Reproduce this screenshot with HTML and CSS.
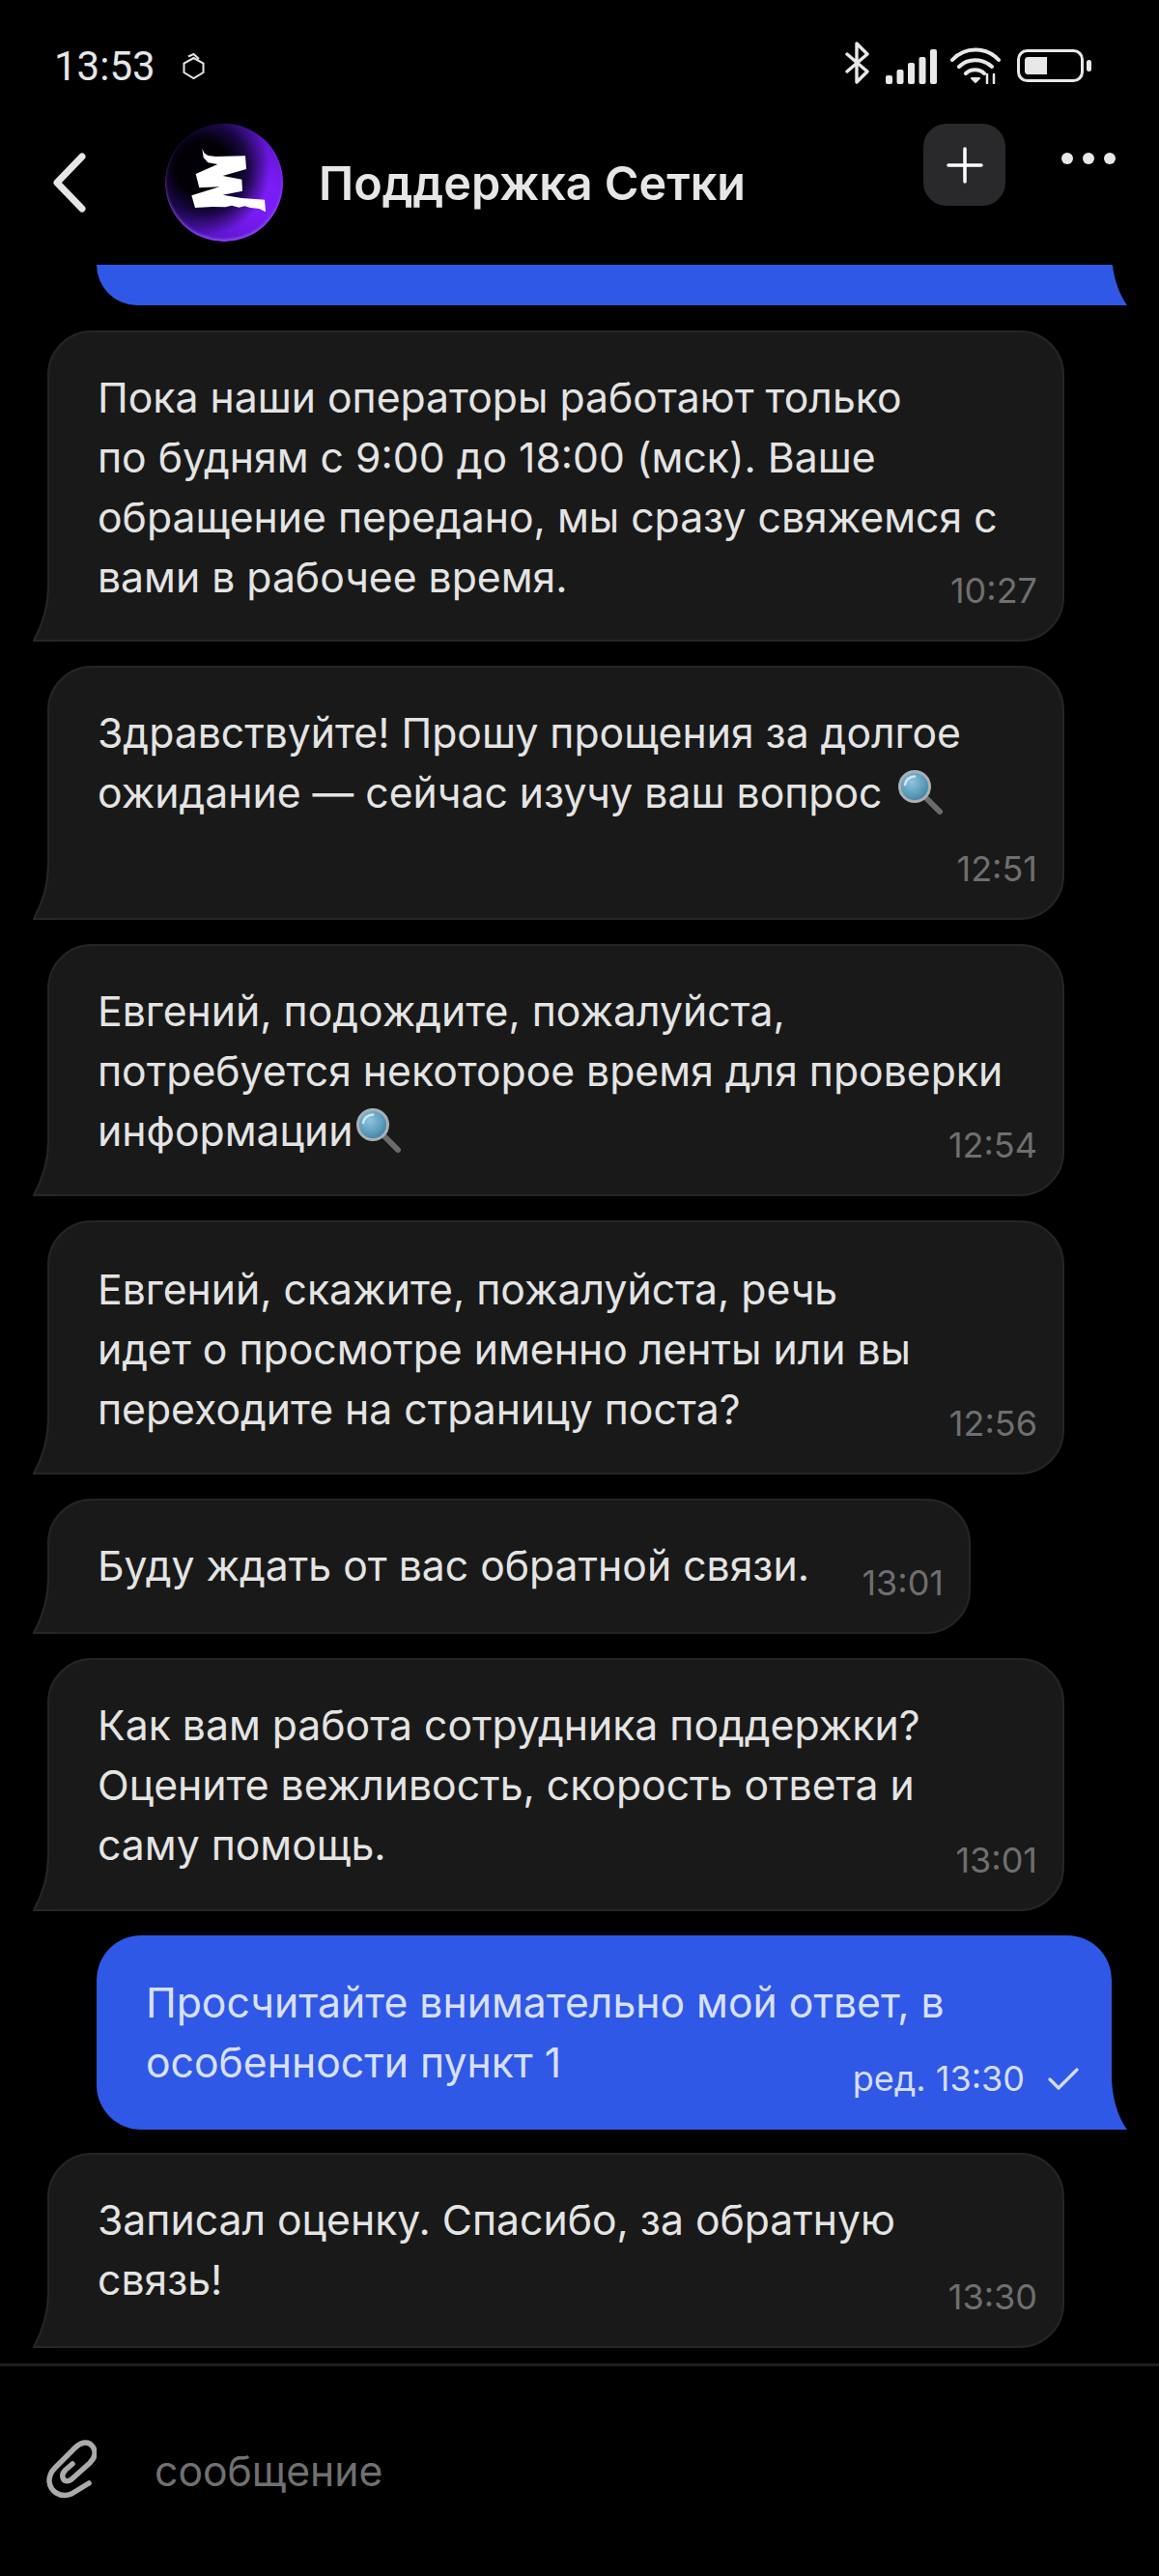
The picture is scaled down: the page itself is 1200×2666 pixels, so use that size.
FILE: index.html
```html
<!DOCTYPE html>
<html lang="ru">
<head>
  <meta charset="UTF-8">
  <title>Поддержка Сетки</title>
  <link rel="stylesheet" href="styles.css">
</head>
<body>
  <svg class="defs" width="0" height="0">
    <defs>
      <radialGradient id="lens" cx="40%" cy="35%" r="70%">
        <stop offset="0" stop-color="#8fc4dc"/>
        <stop offset="0.6" stop-color="#5c9dbd"/>
        <stop offset="1" stop-color="#3f7b9c"/>
      </radialGradient>
      <symbol id="loupe" viewBox="0 0 48 48">
        <path d="M31 31 L44 44" stroke="#6b6b6b" stroke-width="6" stroke-linecap="round"/>
        <circle cx="18" cy="18" r="15.5" fill="url(#lens)" stroke="#a9b1b6" stroke-width="3"/>
        <path d="M8 16 C9 11 13 8 18 7.5" stroke="#cfe7f2" stroke-width="2.5" fill="none" stroke-linecap="round"/>
      </symbol>
      <symbol id="tail" viewBox="0 0 24 56">
        <path d="M16 0 C16 22 9 40 1 55 L24 55 L24 0 Z" fill="#191919"/>
        <path d="M16 0 C16 22 9 40 1 55 L24 55" fill="none" stroke="#272727" stroke-width="2"/>
      </symbol>
      <symbol id="tail-blue" viewBox="0 0 24 56">
        <path d="M8 0 C8 22 14 42 24 56 L0 56 L0 0 Z" fill="#3058e6"/>
      </symbol>
    </defs>
  </svg>

  <div class="phone">
    <div class="statusbar">
      <div class="status-left">
        <span class="clock">13:53</span>
        <svg class="hex" viewBox="0 0 25 29" fill="none" stroke="#e6e6e6" stroke-width="2">
          <path d="M12.5 5 L22.5 10.5 V20 L12.5 26 L2.5 20 V10.500 Z"/>
          <path d="M7 3.500 L12.500 1 L18 6"/>
        </svg>
      </div>
      <div class="status-right">
        <svg class="bt" viewBox="0 0 27 44" fill="none" stroke="#e8e8e8" stroke-width="3.400" stroke-linecap="round" stroke-linejoin="round">
          <path d="M3 13 L24 31 L13 42 V2 L24 13 L3 31"/>
        </svg>
        <svg class="signal" viewBox="0 0 53 36" fill="#e8e8e8">
          <rect x="0" y="27" width="7" height="9" rx="2"/>
          <rect x="11.500" y="21" width="7" height="15" rx="2"/>
          <rect x="23" y="14" width="7" height="22" rx="2"/>
          <rect x="34.500" y="8" width="7" height="28" rx="2"/>
          <rect x="46" y="0" width="7" height="36" rx="2"/>
        </svg>
        <svg class="wifi" viewBox="0 0 52 38" fill="none" stroke="#e8e8e8" stroke-width="4" stroke-linecap="round">
          <path d="M2 13 C15 -1 37 -1 50 13"/>
          <path d="M9 20 C18 11 33 11 43 20"/>
          <path d="M16 27 C21 22 30 22 35 27"/>
          <path d="M22 32 L26 36 L30 32 Z" fill="#e8e8e8" stroke-width="2" stroke-linejoin="round"/>
          <path d="M38 28 V37 M45 28 V37" stroke-width="2.500"/>
        </svg>
        <svg class="battery" viewBox="0 0 77 34" fill="none">
          <rect x="1.500" y="1.500" width="66" height="31" rx="9" stroke="#e8e8e8" stroke-width="3"/>
          <path d="M12 8 H31 V26 H12 C9 26 8 25 8 22 V12 C8 9 9 8 12 8 Z" fill="#e8e8e8"/>
          <rect x="72" y="11" width="5" height="12" rx="2.500" fill="#e8e8e8"/>
        </svg>
      </div>
    </div>

    <header class="topbar">
      <div class="topbar-left">
        <svg class="back" viewBox="0 0 34 62" fill="none" stroke="#e6e6e6" stroke-width="7" stroke-linecap="round" stroke-linejoin="round">
          <path d="M30 4 L4 31 L30 58"/>
        </svg>
        <div class="avatar">
          <svg viewBox="93 85 366 366">
            <path d="M208 162 L214 176 L226 184 L250 187 L342 185 L345 226 L272 247 L331 258 L333 294 L272 306 L330 316 L402 321 L405 359 L385 349 L358 346 L340 341 L322 345 L300 339 L280 344 L240 343 L186 346 L175 308 L262 281 L199 284 L188 241 L256 211 L226 206 L212 190 Z" fill="#fff"/>
          </svg>
        </div>
        <span class="title">Поддержка Сетки</span>
      </div>
      <div class="topbar-right">
        <div class="add-btn">
          <svg viewBox="0 0 38 38" stroke="#fff" stroke-width="3.500" stroke-linecap="round">
            <path d="M19 2 V36 M2 19 H36"/>
          </svg>
        </div>
        <div class="dots"><i></i><i></i><i></i></div>
      </div>
    </header>

    <main class="chat">
      <div class="bubble bubble-out bubble-cut">
        <svg class="tail-out"><use href="#tail-blue"/></svg>
      </div>

      <div class="bubble bubble-in tight">
        Пока наши операторы работают только<br>
        по будням с 9:00 до 18:00 (мск). Ваше<br>
        обращение передано, мы сразу свяжемся с<br>
        вами в рабочее время.
        <span class="time">10:27</span>
        <svg class="tail-in"><use href="#tail"/></svg>
      </div>

      <div class="bubble bubble-in extra-row">
        Здравствуйте! Прошу прощения за долгое<br>
        ожидание — сейчас изучу ваш вопрос <svg class="emoji"><use href="#loupe"/></svg>
        <span class="time">12:51</span>
        <svg class="tail-in"><use href="#tail"/></svg>
      </div>

      <div class="bubble bubble-in">
        Евгений, подождите, пожалуйста,<br>
        потребуется некоторое время для проверки<br>
        информации<svg class="emoji"><use href="#loupe"/></svg>
        <span class="time">12:54</span>
        <svg class="tail-in"><use href="#tail"/></svg>
      </div>

      <div class="bubble bubble-in lowered">
        Евгений, скажите, пожалуйста, речь<br>
        идет о просмотре именно ленты или вы<br>
        переходите на страницу поста?
        <span class="time">12:56</span>
        <svg class="tail-in"><use href="#tail"/></svg>
      </div>

      <div class="bubble bubble-in bubble-short roomy">
        Буду ждать от вас обратной связи.
        <span class="time">13:01</span>
        <svg class="tail-in"><use href="#tail"/></svg>
      </div>

      <div class="bubble bubble-in loose">
        Как вам работа сотрудника поддержки?<br>
        Оцените вежливость, скорость ответа и<br>
        саму помощь.
        <span class="time">13:01</span>
        <svg class="tail-in"><use href="#tail"/></svg>
      </div>

      <div class="bubble bubble-out">
        Просчитайте внимательно мой ответ, в<br>
        особенности пункт 1
        <span class="time time-out">ред. 13:30
          <svg class="check" viewBox="0 0 32 23" fill="none" stroke="#d5ddf8" stroke-width="3.200" stroke-linecap="round" stroke-linejoin="round">
            <path d="M2 12 L11 21 L30 2"/>
          </svg>
        </span>
        <svg class="tail-out"><use href="#tail-blue"/></svg>
      </div>

      <div class="bubble bubble-in roomy">
        Записал оценку. Спасибо, за обратную<br>
        связь!
        <span class="time">13:30</span>
        <svg class="tail-in"><use href="#tail"/></svg>
      </div>
    </main>

    <footer class="composer">
      <svg class="clip" viewBox="0 0 52 62" fill="none" stroke="#ababab" stroke-width="5.500" stroke-linecap="round" stroke-linejoin="round">
        <path d="M44 46 L26 57 C14 62 4 54 3 44 C3 38 5 34 9 30 L30 9 C36 3 44 2 48 8 C52 14 50 20 45 25 L26 42 C22 45 18 44 17 40 C16 37 18 34 20 32 L27 26"/>
      </svg>
      <span class="placeholder">сообщение</span>
    </footer>
  </div>
</body>
</html>
```

FILE: styles.css
```css
*{
  margin: 0;
  padding: 0;
  box-sizing: border-box;
}
body{
  background-color: #000;
  width: 1200px;
  height: 2666px;
  overflow: hidden;
  font-family: 'Inter', 'Noto Sans', sans-serif;
}
.defs{
  position: absolute;
}
.phone{
  height: 2666px;
  display: flex;
  flex-direction: column;
}

/* status bar */
.statusbar{
  height: 120px;
  padding: 43px 70px 0 56px;
  display: flex;
  justify-content: space-between;
  align-items: flex-start;
}
.status-left{
  display: flex;
  align-items: center;
  gap: 27px;
}
.clock{
  font-family: 'Roboto', sans-serif;
  font-size: 42px;
  line-height: 52px;
  color: #e6e6e6;
}
.hex{
  width: 25px;
  height: 29px;
}
.status-right{
  display: flex;
  align-items: flex-start;
}
.bt{
  width: 27px;
  height: 44px;
  margin-right: 16px;
}
.signal{
  width: 53px;
  height: 36px;
  margin-top: 8px;
  margin-right: 14px;
}
.wifi{
  width: 52px;
  height: 38px;
  margin-top: 6px;
  margin-right: 17px;
}
.battery{
  width: 77px;
  height: 34px;
  margin-top: 8px;
}

/* header */
.topbar{
  height: 154px;
  padding: 8px 45px 0 55px;
  display: flex;
  justify-content: space-between;
  align-items: flex-start;
}
.topbar-left{
  display: flex;
  align-items: center;
  height: 122px;
}
.back{
  width: 34px;
  height: 62px;
  margin-right: 82px;
}
.avatar{
  width: 122px;
  height: 122px;
  border-radius: 50%;
  margin-right: 37px;
  background:
    radial-gradient(circle at 32% 38%, #020006 25%, #1a0745 42%, rgba(90, 20, 210, 0) 62%),
    radial-gradient(circle at 80% 62%, #7a1cf5 15%, #5a14c8 55%, #34108a 100%);
  box-shadow: inset 0 -2px 3px rgba(170, 110, 255, 0.7);
}
.avatar svg{
  display: block;
  width: 122px;
  height: 122px;
}
.title{
  font-size: 48.500px;
  font-weight: 600;
  color: #e6e6e6;
  line-height: 60px;
  margin-top: 2px;
}
.topbar-right{
  display: flex;
  align-items: flex-start;
}
.add-btn{
  width: 85px;
  height: 85px;
  border-radius: 24px;
  background-color: #29292c;
  display: flex;
  align-items: center;
  justify-content: center;
}
.add-btn svg{
  width: 38px;
  height: 38px;
}
.dots{
  display: flex;
  gap: 10px;
  margin-left: 58px;
  margin-top: 30px;
}
.dots i{
  width: 12px;
  height: 12px;
  border-radius: 50%;
  background-color: #e8e8e8;
}

/* messages */
.chat{
  flex: 1;
  display: flex;
  flex-direction: column;
  gap: 25px;
  overflow: hidden;
}
.bubble{
  position: relative;
  flex-shrink: 0;
  width: 1053px;
  padding: 37px 50px 34px;
  border-radius: 46px;
  font-size: 42.700px;
  line-height: 62px;
  white-space: nowrap;
}
.bubble-in{
  margin-left: 49px;
  background-color: #191919;
  border: 2px solid #252525;
  border-bottom-left-radius: 0;
  color: #e4e4e4;
}
.bubble-out{
  margin-left: 100px;
  margin-bottom: -1px;
  width: 1051px;
  padding: 39px 51px 38px;
  background-color: #3058e6;
  border-bottom-right-radius: 0;
  color: #d8e0fb;
}
.bubble-cut{
  height: 42px;
  margin-bottom: 1px;
  padding: 0;
  border-top-left-radius: 0;
  border-top-right-radius: 0;
}
.bubble-short{
  width: 956px;
}
.tight{
  padding-bottom: 33px;
}
.loose{
  padding-bottom: 35px;
}
.roomy{
  padding-bottom: 37px;
}
.lowered{
  padding-top: 39px;
}
.extra-row{
  padding-bottom: 98px;
}
.time{
  position: absolute;
  right: 26px;
  bottom: 29px;
  font-size: 36px;
  line-height: 44px;
  color: #6f6f6f;
}
.time-out{
  color: #d5ddf8;
  display: flex;
  align-items: center;
  gap: 24px;
  right: 34px;
  bottom: 31px;
}
.check{
  width: 32px;
  height: 23px;
}
.emoji{
  width: 48px;
  height: 48px;
  margin-left: 3px;
  vertical-align: -8px;
}
.tail-in{
  position: absolute;
  left: -17px;
  bottom: -2px;
  width: 24px;
  height: 56px;
}
.tail-out{
  position: absolute;
  right: -16px;
  bottom: 0;
  width: 24px;
  height: 56px;
}

/* input row */
.composer{
  height: 220px;
  flex-shrink: 0;
  border-top: 3px solid #1f1f1f;
  padding: 78px 0 0 48px;
  display: flex;
  align-items: flex-start;
  gap: 60px;
}
.clip{
  width: 52px;
  height: 62px;
  margin-top: -3px;
}
.placeholder{
  font-size: 42.700px;
  line-height: 62px;
  color: #707070;
}
```
